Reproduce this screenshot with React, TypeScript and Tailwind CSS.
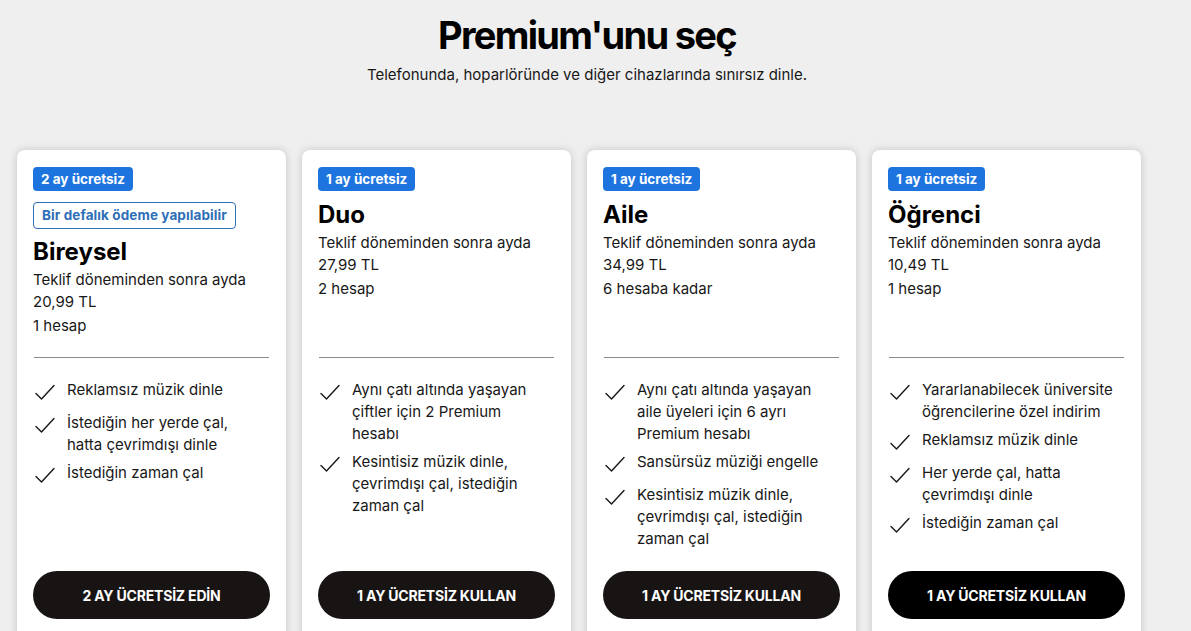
import React from "react";

type Plan = {
  badge: string;
  extra?: string;
  name: string;
  price: string;
  accounts: string;
  features: string[];
  cta: string;
  dark?: boolean;
};

const plans: Plan[] = [
  {
    badge: "2 ay ücretsiz",
    extra: "Bir defalık ödeme yapılabilir",
    name: "Bireysel",
    price: "20,99 TL",
    accounts: "1 hesap",
    features: ["Reklamsız müzik dinle", "İstediğin her yerde çal, hatta çevrimdışı dinle", "İstediğin zaman çal"],
    cta: "2 AY ÜCRETSİZ EDİN",
  },
  {
    badge: "1 ay ücretsiz",
    name: "Duo",
    price: "27,99 TL",
    accounts: "2 hesap",
    features: ["Aynı çatı altında yaşayan çiftler için 2 Premium hesabı", "Kesintisiz müzik dinle, çevrimdışı çal, istediğin zaman çal"],
    cta: "1 AY ÜCRETSİZ KULLAN",
  },
  {
    badge: "1 ay ücretsiz",
    name: "Aile",
    price: "34,99 TL",
    accounts: "6 hesaba kadar",
    features: [
      "Aynı çatı altında yaşayan aile üyeleri için 6 ayrı Premium hesabı",
      "Sansürsüz müziği engelle",
      "Kesintisiz müzik dinle, çevrimdışı çal, istediğin zaman çal",
    ],
    cta: "1 AY ÜCRETSİZ KULLAN",
  },
  {
    badge: "1 ay ücretsiz",
    name: "Öğrenci",
    price: "10,49 TL",
    accounts: "1 hesap",
    features: [
      "Yararlanabilecek üniversite öğrencilerine özel indirim",
      "Reklamsız müzik dinle",
      "Her yerde çal, hatta çevrimdışı dinle",
      "İstediğin zaman çal",
    ],
    cta: "1 AY ÜCRETSİZ KULLAN",
    dark: true,
  },
];

function Check() {
  return (
    <div className="w-[22px] h-[27px] shrink-0 pt-[4px]">
      <svg width="22" height="18" viewBox="0 0 22 18" fill="none">
        <path d="M2 10.5l5.5 5.5L20 2.5" stroke="#181818" strokeWidth="1.4" strokeLinecap="round" strokeLinejoin="round" />
      </svg>
    </div>
  );
}

function PlanCard({ plan }: { plan: Plan }) {
  return (
    <div className="w-[269px] h-[500px] shrink-0 bg-white rounded-lg shadow-[0_0_8px_rgba(0,0,0,0.18)] px-4 pt-[17px] flex flex-col">
      <div className="h-[190px] flex flex-col items-start">
        <span className="h-6 px-2 rounded bg-[#1e74de] text-white text-[13.5px] font-bold leading-6">{plan.badge}</span>
        {plan.extra && (
          <span className="mt-[11px] h-[27px] px-[8px] rounded border border-[#2e6fb7] text-[#2e6fb7] text-[13.5px] font-bold leading-[25px] tracking-[0.1px]">
            {plan.extra}
          </span>
        )}
        <h2 className={`${plan.extra ? "mt-[9px]" : "mt-[10px]"} text-[24px] font-bold leading-[28px] text-black`}>{plan.name}</h2>
        <p className="mt-[3px] text-[15px] leading-[22px] text-[#181818] w-[220px]">Teklif döneminden sonra ayda {plan.price}</p>
        <p className="mt-[2px] text-[15px] leading-[22px] text-[#181818]">{plan.accounts}</p>
      </div>
      <div className="h-px bg-[#8a8a8a] mx-[1px]" />
      <ul className="mt-[21px] h-[192px] flex flex-col gap-[6px]">
        {plan.features.map((f) => (
          <li key={f} className="flex gap-[11px] pl-[1px] pr-[6px]">
            <Check />
            <span className="text-[15px] leading-[22px] text-[#181818]">{f}</span>
          </li>
        ))}
      </ul>
      <button
        className={`h-12 rounded-full ${plan.dark ? "bg-black" : "bg-[#191414]"} text-white text-[14px] font-bold tracking-[-0.2px]`}
      >
        {plan.cta}
      </button>
    </div>
  );
}

export default function App() {
  return (
    <div className="h-[631px] overflow-hidden bg-[#efefef] font-['Inter',sans-serif]">
      <header className="flex flex-col items-center pt-[12px] pr-[17px]">
        <h1 className="text-[38px] font-bold leading-[46px] tracking-[-1.7px] text-black">Premium'unu seç</h1>
        <p className="mt-[7px] text-[15px] leading-[20px] text-[#181818]">
          Telefonunda, hoparlöründe ve diğer cihazlarında sınırsız dinle.
        </p>
      </header>
      <div className="mt-[65px] pl-[17px] flex gap-4">
        {plans.map((p) => (
          <PlanCard key={p.name} plan={p} />
        ))}
      </div>
    </div>
  );
}
